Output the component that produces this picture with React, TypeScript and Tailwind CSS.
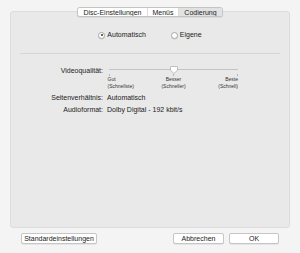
const tabs = [
  { label: 'Disc-Einstellungen', w: 'w-[69px]', active: false },
  { label: 'Menüs', w: 'w-[31px]', active: false },
  { label: 'Codierung', w: 'w-[44px]', active: true },
];

const Radio = ({ checked, label }: { checked?: boolean; label: string }) => (
  <div className="flex items-center gap-[2px]">
    <span className="flex h-[7px] w-[7px] items-center justify-center rounded-full border border-[#a9a9a9] bg-white shadow-[0_0.5px_0.5px_rgba(0,0,0,0.1)]">
      {checked && <span className="h-[2.5px] w-[2.5px] rounded-full bg-[#333]" />}
    </span>
    <span>{label}</span>
  </div>
);

const Row = ({ label, value }: { label: string; value: string }) => (
  <div className="flex gap-[4px] leading-[11.5px]">
    <div className="w-[92px] text-right">{label}</div>
    <div>{value}</div>
  </div>
);

export default function App() {
  return (
    <div className="h-[253px] w-[300px] overflow-hidden bg-[#f4f4f4] font-['Liberation_Sans',Arial,sans-serif] text-[7px] text-[#222]">
      <div className="relative z-10 flex justify-center pt-[7px]">
        <div className="flex h-[10px] overflow-hidden rounded-[2.5px] border border-[#c4c4c4] bg-white shadow-[0_0.5px_0.5px_rgba(0,0,0,0.12)]">
          {tabs.map((t, i) => (
            <div
              key={t.label}
              className={`flex items-center justify-center leading-none ${t.w} ${
                i > 0 ? 'border-l border-[#dcdcdc]' : ''
              } ${t.active ? 'bg-[#e2e2e2]' : ''}`}
            >
              {t.label}
            </div>
          ))}
        </div>
      </div>

      <div className="mx-[10px] -mt-[6px] h-[217px] rounded-[3px] border border-[#dddddd] bg-[#e9e9e9]">
        <div className="flex h-[8px] items-center justify-center gap-[25px] pt-0 mt-[19px]">
          <Radio checked label="Automatisch" />
          <Radio label="Eigene" />
        </div>

        <div className="mx-[9px] mt-[14px] h-px bg-[#d6d6d6]" />

        <div className="mt-[12px] flex gap-[4px]">
          <div className="w-[92px] text-right leading-[9px]">Videoqualität:</div>
          <div className="ml-[2px] w-[129px]">
            <div className="relative h-[8px]">
              <div className="absolute left-0 right-0 top-[2.5px] h-[1.5px] rounded-full bg-[#c3c3c3]" />
              <svg
                className="absolute left-[61px] top-0"
                width="8"
                height="8"
                viewBox="0 0 8 8"
              >
                <path
                  d="M0.5 1 Q0.5 0.5 1 0.5 H7 Q7.5 0.5 7.5 1 V4.2 L4 7.5 L0.5 4.2 Z"
                  fill="#fff"
                  stroke="#a8a8a8"
                  strokeWidth="0.7"
                />
              </svg>
            </div>
            <div className="flex h-[2px] justify-between">
              <span className="w-px bg-[#b5b5b5]" />
              <span className="w-px bg-[#b5b5b5]" />
              <span className="w-px bg-[#b5b5b5]" />
            </div>
            <div className="grid grid-cols-3 text-[5px] leading-[6.5px] text-[#333]">
              <div className="-ml-[1.5px] text-left">
                Gut
                <br />
                (Schnellste)
              </div>
              <div className="text-center">
                Besser
                <br />
                (Schneller)
              </div>
              <div className="text-right">
                Beste
                <br />
                (Schnell)
              </div>
            </div>
          </div>
        </div>

        <div className="mt-[3px]">
          <Row label="Seitenverhältnis:" value="Automatisch" />
          <Row label="Audioformat:" value="Dolby Digital - 192 kbit/s" />
        </div>
      </div>

      <div className="mt-[5px] flex justify-between px-[21px]">
        <button className="flex h-[11px] w-[76px] items-center justify-center rounded-[2px] border border-[#c6c6c6] bg-white leading-none shadow-[0_0.5px_0.5px_rgba(0,0,0,0.12)]">
          Standardeinstellungen
        </button>
        <div className="flex gap-[5px]">
          <button className="flex h-[11px] w-[51px] items-center justify-center rounded-[2px] border border-[#c6c6c6] bg-white leading-none shadow-[0_0.5px_0.5px_rgba(0,0,0,0.12)]">
            Abbrechen
          </button>
          <button className="flex h-[11px] w-[50px] items-center justify-center rounded-[2px] border border-[#c6c6c6] bg-white leading-none shadow-[0_0.5px_0.5px_rgba(0,0,0,0.12)]">
            OK
          </button>
        </div>
      </div>
    </div>
  );
}
